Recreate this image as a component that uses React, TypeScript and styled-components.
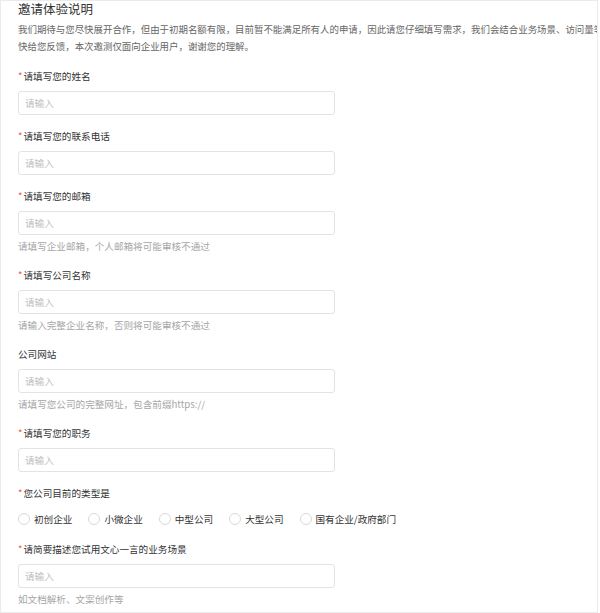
import React from "react";
import styled, { createGlobalStyle } from "styled-components";

const GlobalStyle = createGlobalStyle`
  html, body {
    margin: 0;
    padding: 0;
    background: #fff;
  }
  body {
    font-family: "Noto Sans CJK SC", "Noto Sans", sans-serif;
  }
`;

const Page = styled.div`
  box-sizing: border-box;
  width: 598px;
  height: 613px;
  border: 1px solid #ebebeb;
  padding: 0 0 0 17px;
  overflow: hidden;
`;

const Title = styled.div`
  font-size: 12.5px;
  line-height: 16px;
  color: #333;
`;

const Desc = styled.div`
  margin: 4px 0 13px;
  font-size: 9.45px;
  line-height: 17px;
  color: #666;
  white-space: nowrap;
`;

const Item = styled.div`
  margin-bottom: 13px;
`;

const Label = styled.div<{ $tight?: boolean }>`
  font-size: 9.6px;
  line-height: 16px;
  color: #333;
  margin-bottom: ${(p) => (p.$tight ? 0 : 7)}px;
`;

const Star = styled.span`
  color: #f5565b;
  margin-right: 1px;
`;

const Input = styled.input`
  display: block;
  box-sizing: border-box;
  width: 317px;
  height: 24px;
  padding: 0 6px;
  border: 1px solid #e3e3e3;
  border-radius: 3px;
  outline: none;
  font-family: inherit;
  font-size: 9.6px;
  color: #333;
  background: #fff;
  &::placeholder {
    color: #c0c0c0;
  }
`;

const Help = styled.div`
  margin: 3px 0 3px;
  font-size: 9.6px;
  line-height: 16px;
  color: #a6a6a6;
`;

const RadioRow = styled.div`
  display: flex;
  align-items: center;
  gap: 16px;
  height: 18px;
  margin-top: 9px;
`;

const RadioItem = styled.label`
  display: flex;
  align-items: center;
  font-size: 9.6px;
  line-height: 16px;
  color: #333;
`;

const Circle = styled.span`
  box-sizing: border-box;
  width: 12px;
  height: 12px;
  border: 1px solid #d9d9d9;
  border-radius: 50%;
  margin-right: 4px;
  background: #fff;
`;

type Field = {
  label: string;
  required?: boolean;
  help?: string;
};

const fieldsTop: Field[] = [
  { label: "请填写您的姓名", required: true },
  { label: "请填写您的联系电话", required: true },
  { label: "请填写您的邮箱", required: true, help: "请填写企业邮箱，个人邮箱将可能审核不通过" },
  { label: "请填写公司名称", required: true, help: "请输入完整企业名称，否则将可能审核不通过" },
  { label: "公司网站", help: "请填写您公司的完整网址，包含前缀https://" },
  { label: "请填写您的职务", required: true },
];

const companyTypes = ["初创企业", "小微企业", "中型公司", "大型公司", "国有企业/政府部门"];

const FormItem = ({ label, required, help }: Field) => (
  <Item>
    <Label>
      {required && <Star>*</Star>}
      {label}
    </Label>
    <Input placeholder="请输入" />
    {help && <Help>{help}</Help>}
  </Item>
);

const App = () => {
  return (
    <Page>
      <GlobalStyle />
      <Title>邀请体验说明</Title>
      <Desc>
        我们期待与您尽快展开合作，但由于初期名额有限，目前暂不能满足所有人的申请，因此请您仔细填写需求，我们会结合业务场景、访问量等综合评估，尽
        <br />
        快给您反馈，本次邀测仅面向企业用户，谢谢您的理解。
      </Desc>
      {fieldsTop.map((f) => (
        <FormItem key={f.label} {...f} />
      ))}
      <Item>
        <Label $tight>
          <Star>*</Star>
          您公司目前的类型是
        </Label>
        <RadioRow>
          {companyTypes.map((t) => (
            <RadioItem key={t}>
              <Circle />
              {t}
            </RadioItem>
          ))}
        </RadioRow>
      </Item>
      <FormItem
        label="请简要描述您试用文心一言的业务场景"
        required
        help="如文档解析、文案创作等"
      />
    </Page>
  );
};

export default App;
